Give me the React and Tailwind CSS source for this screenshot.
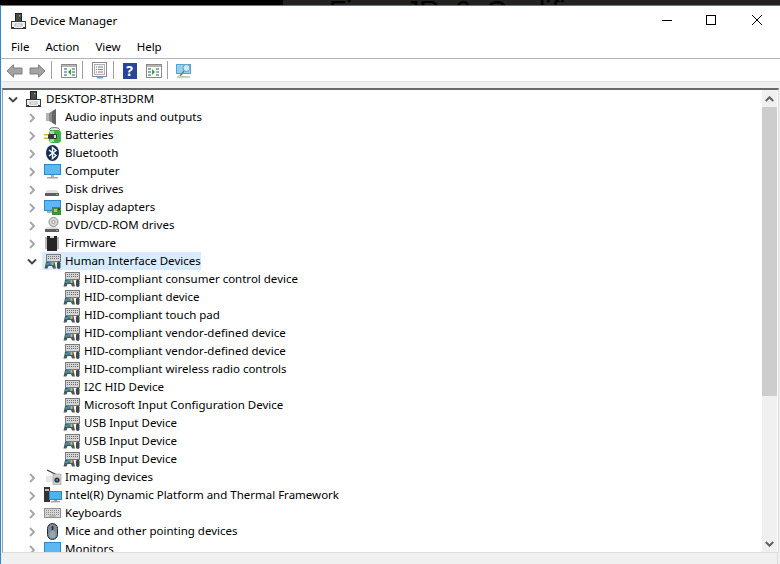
import React from "react";

const Svg = ({ children, w = 16, h = 16 }) => (
  <svg width={w} height={h} viewBox={`0 0 ${w} ${h}`} className="block shrink-0">
    {children}
  </svg>
);

const Pc = () => (
  <Svg>
    <rect x="5.5" y="0.5" width="6" height="8" fill="#4a4a4a" stroke="#222" />
    <rect x="9" y="2" width="1.5" height="1.5" fill="#35d04f" />
    <rect x="1.5" y="8.5" width="14" height="7" fill="#f2f2f2" stroke="#3a3a3a" />
    <rect x="5" y="11" width="7" height="2" fill="#fff" stroke="#777" strokeWidth="0.5" />
    <rect x="2" y="14" width="2" height="2" fill="#333" />
    <rect x="13" y="14" width="2" height="2" fill="#333" />
  </Svg>
);
const Audio = () => (
  <Svg>
    <rect x="2" y="4" width="4" height="8" fill="#b4b4b4" />
    <path d="M5 4 L12 0 V16 L5 12 Z" fill="#8c8c8c" />
    <path d="M8 2.5 L12 0 V16 L8 13.5 Z" fill="#666" />
  </Svg>
);
const Battery = () => (
  <Svg w={18}>
    <ellipse cx="10.5" cy="2.5" rx="5" ry="2" fill="#e8e8e8" stroke="#555" strokeWidth="0.8" />
    <rect x="5" y="3" width="12" height="13" rx="3.5" fill="#3fb04a" />
    <rect x="6" y="4" width="4" height="11" fill="#93e493" />
    <rect x="4" y="7" width="9" height="5" rx="1" fill="#3a3a3a" />
    <rect x="0" y="7" width="4" height="1.4" fill="#e0b020" />
    <rect x="0" y="10.5" width="4" height="1.4" fill="#e0b020" />
    <rect x="10" y="8" width="2" height="3" fill="#ddd" />
  </Svg>
);
const Bluetooth = () => (
  <Svg>
    <ellipse cx="8.5" cy="8" rx="6.5" ry="8" fill="#152f57" />
    <path d="M5 5 L12 10.5 L8.5 13.5 V2.5 L12 5.5 L5 11" fill="none" stroke="#fff" strokeWidth="1.4" />
  </Svg>
);
const Computer = () => (
  <Svg w={18}>
    <rect x="0.5" y="1.5" width="16" height="10" fill="#5cb8f0" stroke="#2a8ad0" />
    <rect x="7" y="12" width="3" height="2" fill="#b0b0b0" />
    <rect x="3" y="14" width="11" height="1.5" fill="#a8a8a8" />
  </Svg>
);
const Disk = () => (
  <Svg>
    <path d="M3 9 H13 L15 12 H1 Z" fill="#e0e0e0" />
    <rect x="1" y="12" width="14" height="3" fill="#5e5e5e" />
    <rect x="12" y="13" width="2" height="1" fill="#3de05a" />
  </Svg>
);
const Display = () => (
  <Svg w={18}>
    <rect x="0.5" y="1.5" width="16" height="10" fill="#5cb8f0" stroke="#2a8ad0" />
    <rect x="3" y="12" width="9" height="2" fill="#b0b0b0" />
    <rect x="8" y="8" width="9" height="8" fill="#3f8f3f" />
    <rect x="10" y="10" width="3" height="3" fill="#c9c23f" />
    <rect x="14" y="9" width="2" height="2" fill="#1f5f1f" />
  </Svg>
);
const Dvd = () => (
  <Svg>
    <circle cx="9.5" cy="5" r="4.5" fill="#d8d8d8" stroke="#8f8f8f" />
    <circle cx="9.5" cy="5" r="1.5" fill="#fff" stroke="#777" strokeWidth="0.7" />
    <path d="M3 10 H13 L15 12 H1 Z" fill="#e0e0e0" />
    <rect x="1" y="12" width="14" height="3" fill="#5e5e5e" />
    <rect x="12" y="13" width="2" height="1" fill="#3de05a" />
  </Svg>
);
const Firmware = () => (
  <Svg>
    <rect x="3" y="1" width="10" height="15" fill="#262626" />
    <rect x="6" y="1" width="4" height="2" fill="#ddd" />
    <path d="M1 3h2M1 5h2M1 7h2M1 9h2M1 11h2M1 13h2M13 3h2M13 5h2M13 7h2M13 9h2M13 11h2M13 13h2" stroke="#777" strokeWidth="1" />
  </Svg>
);
const Hid = () => (
  <Svg w={17}>
    <rect x="2.5" y="1.5" width="14" height="7" fill="#d4d4d4" stroke="#7a7a7a" />
    <path d="M4 3.5h11M4 5.5h11" stroke="#6f6f6f" strokeWidth="1" strokeDasharray="1 1" />
    <path d="M0.5 15.5 L2 9 H10.5 L12 15.5 H9 L8 13 H4.5 L3.5 15.5 Z" fill="#4d5760" />
    <rect x="4.5" y="8" width="3" height="3.5" fill="#2f8fe8" />
    <rect x="7.5" y="9" width="2" height="3" fill="#e8b030" />
    <rect x="2.5" y="10" width="2" height="2" fill="#40b060" />
    <rect x="13" y="8.5" width="3.5" height="7.5" rx="1.7" fill="#3f4850" />
  </Svg>
);
const Imaging = () => (
  <Svg w={18}>
    <path d="M3 1 L13 6" stroke="#333" strokeWidth="1.2" />
    <rect x="2" y="7" width="7" height="6" fill="#e6e6e6" />
    <rect x="9" y="5" width="8" height="11" fill="#cfcfcf" stroke="#888" strokeWidth="0.5" />
    <circle cx="13" cy="11" r="2.6" fill="#333" />
    <circle cx="13" cy="11" r="1.1" fill="#2f8fe8" />
  </Svg>
);
const Intel = () => (
  <Svg w={18}>
    <rect x="0" y="0" width="6" height="15" fill="#333" />
    <rect x="1" y="2" width="4" height="2" fill="#bbb" />
    <rect x="5.5" y="4.5" width="12" height="8" fill="#4db2ee" stroke="#2a8ad0" />
    <rect x="10" y="13" width="3" height="1" fill="#999" />
    <rect x="7" y="14" width="9" height="1.5" fill="#aaa" />
  </Svg>
);
const Keyboard = () => (
  <Svg w={18}>
    <rect x="0.5" y="3.5" width="16" height="9" fill="#d6d6d6" stroke="#8f8f8f" />
    <path d="M2 5.5h13M2 7.5h13M2 9.5h13" stroke="#8e8e8e" strokeWidth="1" strokeDasharray="1 1" />
    <rect x="5" y="10.5" width="7" height="1" fill="#999" />
  </Svg>
);
const Mouse = () => (
  <Svg h={17}>
    <rect x="3.5" y="0.5" width="10" height="16" rx="5" fill="#7d8b99" stroke="#262b30" />
    <rect x="7.5" y="3" width="2" height="4" rx="1" fill="#2d3338" />
    <rect x="5.5" y="8" width="6" height="7" rx="3" fill="#98a5b2" />
  </Svg>
);
const Monitor = () => (
  <Svg w={18}>
    <rect x="0.5" y="1.5" width="16" height="11" fill="#5cb8f0" stroke="#2a8ad0" />
  </Svg>
);

const Chevron = ({ open }) =>
  open ? (
    <svg width="14" height="18" viewBox="0 0 14 18" className="block shrink-0">
      <path d="M3 7.5 L7 11.5 L11 7.5" fill="none" stroke="#444" strokeWidth="1.9" />
    </svg>
  ) : (
    <svg width="14" height="18" viewBox="0 0 14 18" className="block shrink-0">
      <path d="M5 6 L9 10 L5 14" fill="none" stroke="#a6a6a6" strokeWidth="1.9" />
    </svg>
  );

const Row = ({ indent, icon, label, chevron, selected }) => (
  <div className={`flex h-[18px] items-center ${indent}`}>
    {chevron ? <Chevron open={chevron === "open"} /> : <div className="w-[14px] shrink-0" />}
    <div className={`ml-[3px] flex h-[18px] items-center pl-[2px] ${selected ? "bg-[#d9ecfd]" : ""}`}>
      <div className="w-[21px] shrink-0">{icon}</div>
      <span className="whitespace-nowrap">{label}</span>
    </div>
  </div>
);

const L0 = "pl-[3px]";
const L1 = "pl-[22px]";
const L2 = "pl-[41px]";

const hid = [
  "HID-compliant consumer control device",
  "HID-compliant device",
  "HID-compliant touch pad",
  "HID-compliant vendor-defined device",
  "HID-compliant vendor-defined device",
  "HID-compliant wireless radio controls",
  "I2C HID Device",
  "Microsoft Input Configuration Device",
  "USB Input Device",
  "USB Input Device",
  "USB Input Device",
];

const Sep = () => <div className="ml-[2px] mr-[5px] h-[18px] w-px bg-[#a0a0a0]" />;
const Tool = ({ children }) => <div className="flex h-[22px] w-[23px] items-center justify-center pt-[1px]">{children}</div>;

const Arrow = ({ flip }) => (
  <svg width="17" height="14" viewBox="0 0 17 14" className={`block ${flip ? "-scale-x-100" : ""}`}>
    <path d="M7.5 0.8 L1 7 L7.5 13.2 V10 H16 V4 H7.5 Z" fill="#a4a4a4" stroke="#7e7e7e" />
  </svg>
);

export default function App() {
  return (
    <div className="flex h-[564px] w-[780px] flex-col overflow-hidden bg-white text-[11.5px] text-black [font-family:'Noto_Sans','Open_Sans',sans-serif]">
      <div className="flex h-[5px] shrink-0 overflow-hidden">
        <div className="w-[283px] bg-black" />
        <div className="flex-1 whitespace-pre bg-[#222222] pl-[46px] text-[28px] leading-[24px] text-black [font-family:'Liberation_Sans',sans-serif] -mt-[1px]">
          {"Fix     JR  6  Qualifi"}
        </div>
      </div>
      <div className="flex flex-1 flex-col border-l border-t border-[#2a8ad4]">
        <div className="flex h-[28px] shrink-0 items-center">
          <div className="ml-[9px] w-[20px] pt-[1px]"><Pc /></div>
          <span className="relative top-[1px]">Device Manager</span>
          <div className="ml-auto mr-[1px] flex">
            <div className="flex h-[28px] w-[45px] items-center justify-center">
              <div className="h-px w-[10px] bg-black" />
            </div>
            <div className="flex h-[28px] w-[45px] items-center justify-center pr-[2px]">
              <div className="size-[10px] border border-black" />
            </div>
            <div className="flex h-[28px] w-[45px] items-center justify-center">
              <svg width="10" height="10" viewBox="0 0 10 10" className="block">
                <path d="M0 0 L10 10 M10 0 L0 10" stroke="#000" strokeWidth="1" />
              </svg>
            </div>
          </div>
        </div>
        <div className="flex h-[25px] shrink-0 items-center gap-[16px] border-b border-[#b4b4b4] pl-[10px] pt-[1px]">
          <span>File</span>
          <span>Action</span>
          <span>View</span>
          <span>Help</span>
        </div>
        <div className="flex h-[23px] shrink-0 items-center border-b border-[#e2e2e2] pl-[2px]">
          <Tool><Arrow /></Tool>
          <Tool><Arrow flip /></Tool>
          <Sep />
          <Tool>
            <svg width="16" height="16" viewBox="0 0 16 16" className="block">
              <rect x="0.5" y="1.5" width="15" height="13" fill="#fff" stroke="#8a8a8a" />
              <rect x="1" y="2" width="14" height="2" fill="#b5b5b5" />
              <path d="M3 6h3M3 9h3M3 12h3M11 6h3M11 9h3M11 12h3" stroke="#6b8ea8" strokeWidth="1.4" />
              <path d="M10 6 L7 9 L10 12 Z" fill="#2fa82f" />
            </svg>
          </Tool>
          <Sep />
          <Tool>
            <svg width="16" height="17" viewBox="0 0 16 17" className="block">
              <rect x="0.5" y="0.5" width="14" height="14" fill="#fff" stroke="#8a8a8a" />
              <rect x="2.5" y="2.5" width="10" height="10" fill="#f4f4f4" stroke="#b0b0b0" />
              <path d="M4 5h1M6 5h5M4 7.5h1M6 7.5h5M4 10h1M6 10h5" stroke="#7c8b98" />
              <rect x="5" y="15" width="6" height="1.5" fill="#4db2ee" />
            </svg>
          </Tool>
          <Sep />
          <Tool>
            <div className="mr-[2px] flex h-[16px] w-[14px] items-center justify-center bg-[#27459b] text-[14px] font-bold leading-none text-white">?</div>
          </Tool>
          <Tool>
            <svg width="16" height="16" viewBox="0 0 16 16" className="block">
              <rect x="0.5" y="1.5" width="15" height="13" fill="#fff" stroke="#8a8a8a" />
              <rect x="1" y="2" width="14" height="2" fill="#b5b5b5" />
              <path d="M2 6h3M2 9h3M2 12h3M10 6h3M10 9h3M10 12h3" stroke="#6b8ea8" strokeWidth="1.4" />
              <path d="M6 6 L9 9 L6 12 Z" fill="#2fa82f" />
            </svg>
          </Tool>
          <Sep />
          <Tool>
            <svg width="17" height="16" viewBox="0 0 17 16" className="block">
              <rect x="0.5" y="1.5" width="14" height="9" fill="#8fd0f5" stroke="#4fa6da" />
              <circle cx="10.5" cy="5" r="3.5" fill="#cbe9fb" stroke="#7a98aa" />
              <path d="M8 8 L4 13" stroke="#777" strokeWidth="1.4" />
              <path d="M1 14 H14" stroke="#a8a8a8" strokeWidth="1.2" />
            </svg>
          </Tool>
        </div>
        <div className="flex min-h-0 flex-1 flex-col bg-[#f0f0f0]">
          <div className="ml-[1px] mr-[1px] mt-[6px] flex h-[465px] shrink-0 border-b border-l border-r border-t-2 border-b-[#dcdcdc] border-l-[#a0a0a0] border-r-[#dcdcdc] border-t-[#696969] bg-white">
            <div className="min-w-0 flex-1 overflow-hidden">
              <Row indent={L0} chevron="open" icon={<Pc />} label="DESKTOP-8TH3DRM" />
              <Row indent={L1} chevron="closed" icon={<Audio />} label="Audio inputs and outputs" />
              <Row indent={L1} chevron="closed" icon={<Battery />} label="Batteries" />
              <Row indent={L1} chevron="closed" icon={<Bluetooth />} label="Bluetooth" />
              <Row indent={L1} chevron="closed" icon={<Computer />} label="Computer" />
              <Row indent={L1} chevron="closed" icon={<Disk />} label="Disk drives" />
              <Row indent={L1} chevron="closed" icon={<Display />} label="Display adapters" />
              <Row indent={L1} chevron="closed" icon={<Dvd />} label="DVD/CD-ROM drives" />
              <Row indent={L1} chevron="closed" icon={<Firmware />} label="Firmware" />
              <Row indent={L1} chevron="open" selected icon={<Hid />} label="Human Interface Devices" />
              {hid.map((t, i) => (
                <Row key={i} indent={L2} icon={<Hid />} label={t} />
              ))}
              <Row indent={L1} chevron="closed" icon={<Imaging />} label="Imaging devices" />
              <Row indent={L1} chevron="closed" icon={<Intel />} label="Intel(R) Dynamic Platform and Thermal Framework" />
              <Row indent={L1} chevron="closed" icon={<Keyboard />} label="Keyboards" />
              <Row indent={L1} chevron="closed" icon={<Mouse />} label="Mice and other pointing devices" />
              <Row indent={L1} chevron="closed" icon={<Monitor />} label="Monitors" />
            </div>
            <div className="mr-[1px] flex w-[15px] shrink-0 flex-col bg-[#f0f0f0]">
              <div className="flex h-[17px] shrink-0 items-center justify-center">
                <svg width="9" height="6" viewBox="0 0 9 6" className="block">
                  <path d="M0.8 5 L4.5 1.3 L8.2 5" fill="none" stroke="#606060" strokeWidth="2" />
                </svg>
              </div>
              <div className="h-[289px] shrink-0 bg-[#cdcdcd]" />
              <div className="flex-1" />
              <div className="flex h-[17px] shrink-0 items-center justify-center">
                <svg width="9" height="6" viewBox="0 0 9 6" className="block">
                  <path d="M0.8 1 L4.5 4.7 L8.2 1" fill="none" stroke="#606060" strokeWidth="2" />
                </svg>
              </div>
            </div>
          </div>
          <div className="flex flex-1 justify-end pr-[2px]">
            <div className="w-px bg-[#dcdcdc]" />
          </div>
        </div>
      </div>
    </div>
  );
}
